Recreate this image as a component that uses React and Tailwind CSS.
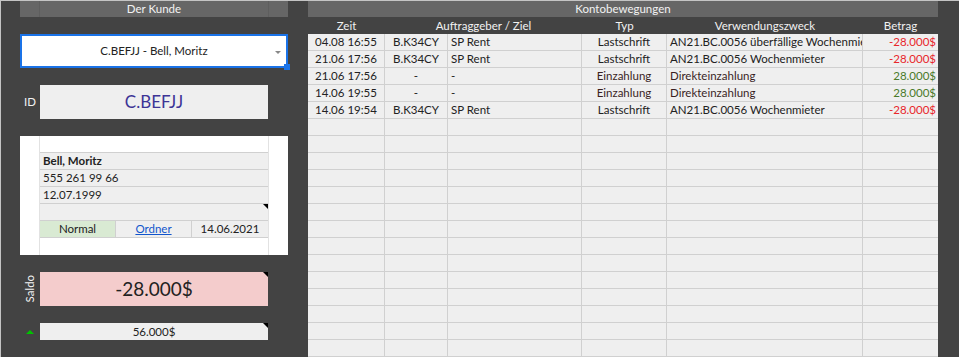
import React from "react";

const rows = [
  ["04.08 16:55", "B.K34CY", "SP Rent", "Lastschrift", "AN21.BC.0056 überfällige Wochenmieter", "-28.000$", "neg"],
  ["21.06 17:56", "B.K34CY", "SP Rent", "Lastschrift", "AN21.BC.0056 Wochenmieter", "-28.000$", "neg"],
  ["21.06 17:56", "-", "-", "Einzahlung", "Direkteinzahlung", "28.000$", "pos"],
  ["14.06 19:55", "-", "-", "Einzahlung", "Direkteinzahlung", "28.000$", "pos"],
  ["14.06 19:54", "B.K34CY", "SP Rent", "Lastschrift", "AN21.BC.0056 Wochenmieter", "-28.000$", "neg"],
];

const font = { fontFamily: "Lato, 'Open Sans', sans-serif" };

function Triangle() {
  return (
    <div className="absolute right-0 top-0 w-0 h-0 border-t-[5px] border-t-black border-l-[5px] border-l-transparent" />
  );
}

function DataRow({ r }) {
  const d = r || ["", "", "", "", "", "", ""];
  const cell =
    "h-[17px] box-border border-r border-b border-[#d0d0d0] bg-[#efefef] text-[11.5px] leading-[16px] overflow-hidden whitespace-nowrap";
  const base = "text-[#222]";
  const typColor = d[6] === "pos" ? "text-[#3a1f1f]" : "text-[#222]";
  const amtColor = d[6] === "neg" ? "text-[#e8262b]" : "text-[#4a7a2a]";
  return (
    <>
      <div className={`${cell} ${base} text-center`}>{d[0]}</div>
      <div className={`${cell} ${base} text-center`}>{d[1]}</div>
      <div className={`${cell} ${base} pl-[3px]`}>{d[2]}</div>
      <div className={`${cell} ${typColor} text-center`}>{d[3]}</div>
      <div className={`${cell} ${typColor} pl-[3px]`}>{d[4]}</div>
      <div className={`${cell} ${amtColor} border-r-0 text-right pr-[2px]`}>{d[5]}</div>
    </>
  );
}

export default function App() {
  const extra = Array.from({ length: 14 });
  return (
    <div
      className="w-[959px] h-[357px] bg-[#434343] border-t border-l border-[#c4c4c4] box-border overflow-hidden flex"
      style={font}
    >
      <div className="w-[19px] shrink-0" />

      {/* Left panel */}
      <div className="w-[268px] shrink-0 flex flex-col">
        <div className="h-[16px] bg-[#666666] flex">
          <div className="w-[20px] border-r border-[#5e5e5e]" />
          <div className="flex-1 text-center text-[11.5px] leading-[15px] text-[#f2f2f2]">Der Kunde</div>
          <div className="w-[20px] border-l border-[#5e5e5e]" />
        </div>
        <div className="h-[17px]" />
        {/* Dropdown */}
        <div className="relative h-[34px] bg-white border-2 border-[#1a73e8] box-border flex items-center justify-center">
          <span className="text-[11.5px] text-[#222]">C.BEFJJ - Bell, Moritz</span>
          <div className="absolute right-[5px] top-[15px] w-0 h-0 border-l-[3px] border-r-[3px] border-t-[3px] border-l-transparent border-r-transparent border-t-[#888]" />
          <div className="absolute -right-[4px] -bottom-[4px] w-[6px] h-[6px] bg-[#1a73e8]" />
        </div>
        <div className="h-[17px]" />
        {/* ID */}
        <div className="h-[34px] flex">
          <div className="w-[20px] flex items-center justify-center text-[11.5px] text-[#f2f2f2]">ID</div>
          <div className="w-[228px] bg-[#efefef] flex items-center justify-center text-[17px] text-[#3d3496]">
            C.BEFJJ
          </div>
        </div>
        <div className="h-[17px]" />
        {/* Card */}
        <div className="h-[119px] bg-white flex">
          <div className="w-[20px] border-r border-[#e2e2e2]" />
          <div className="w-[228px] flex flex-col text-[11.5px] text-[#222]">
            <div className="h-[17px] border-b border-[#d0d0d0] box-border" />
            <div className="h-[17px] bg-[#efefef] border-b border-[#d0d0d0] box-border pl-[3px] leading-[16px] font-bold">Bell, Moritz</div>
            <div className="h-[17px] bg-[#efefef] border-b border-[#d0d0d0] box-border pl-[3px] leading-[16px]">555 261 99 66</div>
            <div className="h-[17px] bg-[#efefef] border-b border-[#d0d0d0] box-border pl-[3px] leading-[16px]">12.07.1999</div>
            <div className="relative h-[17px] bg-[#efefef] border-b border-[#d0d0d0] box-border">
              <Triangle />
            </div>
            <div className="h-[17px] flex border-b border-[#d0d0d0] box-border leading-[16px]">
              <div className="w-[76px] bg-[#d9ead3] border-r border-[#d0d0d0] text-center">Normal</div>
              <div className="w-[76px] bg-[#efefef] border-r border-[#d0d0d0] text-center">
                <span className="text-[#1155cc] underline">Ordner</span>
              </div>
              <div className="w-[76px] bg-[#efefef] text-center">14.06.2021</div>
            </div>
            <div className="h-[17px]" />
          </div>
          <div className="w-[20px] border-l border-[#e2e2e2]" />
        </div>
        <div className="h-[17px]" />
        {/* Saldo */}
        <div className="h-[34px] flex">
          <div className="w-[20px] flex items-center justify-center">
            <span className="-rotate-90 text-[11.5px] text-[#f2f2f2] whitespace-nowrap">Saldo</span>
          </div>
          <div className="relative w-[228px] bg-[#f4cccc] flex items-center justify-center text-[19px] text-[#222]">
            -28.000$
            <Triangle />
          </div>
        </div>
        <div className="h-[17px]" />
        <div className="h-[17px] flex">
          <div className="w-[20px] flex items-center justify-center">
            <div className="w-0 h-0 border-l-[4px] border-r-[4px] border-b-[4px] border-l-transparent border-r-transparent border-b-[#00c400]" />
          </div>
          <div className="relative w-[228px] bg-[#efefef] text-center text-[11.5px] leading-[17px] text-[#222]">
            56.000$
            <Triangle />
          </div>
        </div>
      </div>

      <div className="w-[20px] shrink-0" />

      {/* Right panel */}
      <div className="w-[630px] shrink-0 flex flex-col">
        <div className="h-[16px] bg-[#666666] text-center text-[11.5px] leading-[15px] text-[#f2f2f2]">Kontobewegungen</div>
        <div className="h-[17px] grid grid-cols-[77px_197px_85px_196px_75px] text-[11.5px] leading-[17px] text-[#f2f2f2] text-center">
          <div>Zeit</div>
          <div>Auftraggeber / Ziel</div>
          <div>Typ</div>
          <div>Verwendungszweck</div>
          <div>Betrag</div>
        </div>
        <div className="grid grid-cols-[77px_63px_134px_85px_196px_75px]">
          {rows.map((r, i) => (
            <DataRow key={i} r={r} />
          ))}
          {extra.map((_, i) => (
            <DataRow key={"e" + i} />
          ))}
        </div>
      </div>
    </div>
  );
}
